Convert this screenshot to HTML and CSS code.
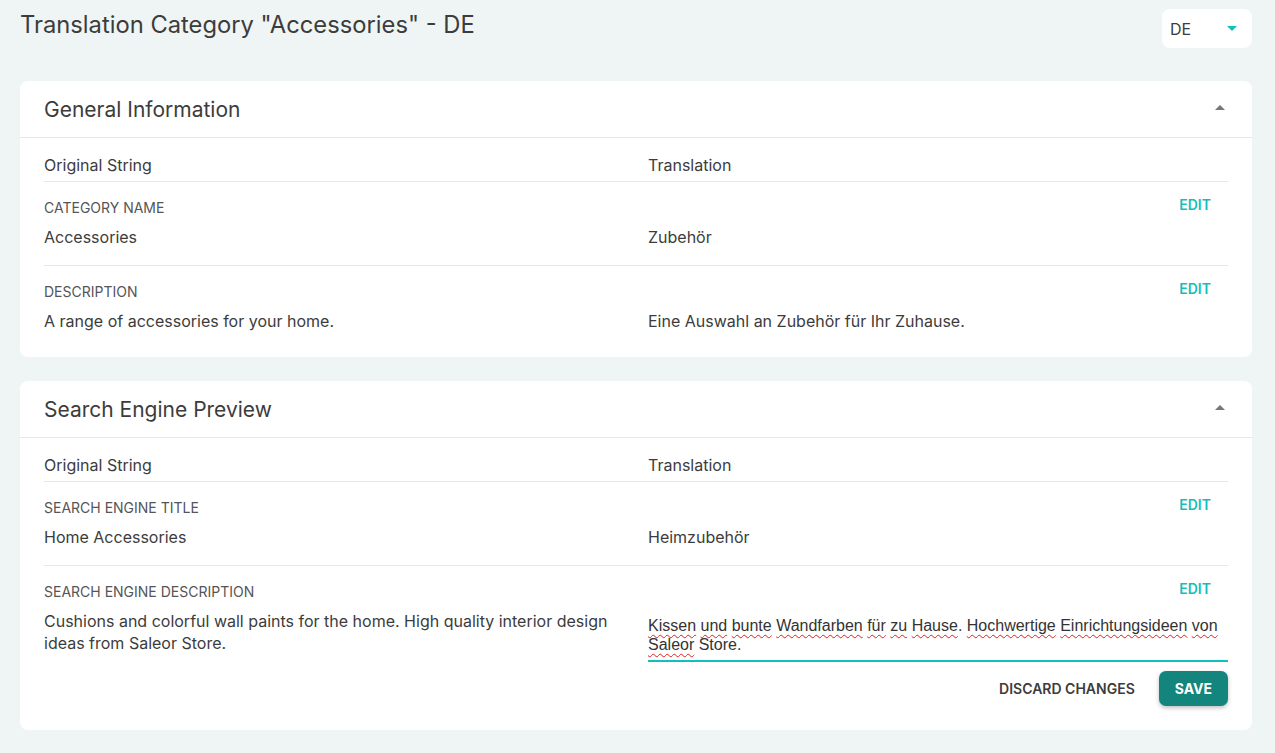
FILE: index.html
```html
<!DOCTYPE html>
<html lang="de">
<head>
<meta charset="utf-8">
<title>Translation Category</title>
<link rel="stylesheet" href="styles.css">
</head>
<body>
<div class="page">
  <header class="top">
    <h1 class="page-title">Translation Category "Accessories" - DE</h1>
    <div class="lang-select">
      <span>DE</span>
      <svg class="caret" width="10" height="5" viewBox="0 0 10 5"><path d="M0 0h10L5 5z" fill="#13bebb"/></svg>
    </div>
  </header>

  <section class="card">
    <div class="card-head">
      <h2 class="card-title">General Information</h2>
      <svg class="collapse" width="10" height="5" viewBox="0 0 10 5"><path d="M0 5h10L5 0z" fill="#777"/></svg>
    </div>
    <div class="card-body">
      <div class="grid head-row">
        <div>Original String</div>
        <div>Translation</div>
      </div>
      <div class="grid field">
        <div class="label">CATEGORY NAME</div>
        <div class="edit-cell"><span class="edit">EDIT</span></div>
        <div class="value">Accessories</div>
        <div class="value">Zubehör</div>
      </div>
      <div class="grid field last">
        <div class="label">DESCRIPTION</div>
        <div class="edit-cell"><span class="edit">EDIT</span></div>
        <div class="value">A range of accessories for your home.</div>
        <div class="value">Eine Auswahl an Zubehör für Ihr Zuhause.</div>
      </div>
    </div>
  </section>

  <section class="card">
    <div class="card-head">
      <h2 class="card-title">Search Engine Preview</h2>
      <svg class="collapse" width="10" height="5" viewBox="0 0 10 5"><path d="M0 5h10L5 0z" fill="#777"/></svg>
    </div>
    <div class="card-body">
      <div class="grid head-row">
        <div>Original String</div>
        <div>Translation</div>
      </div>
      <div class="grid field">
        <div class="label">SEARCH ENGINE TITLE</div>
        <div class="edit-cell"><span class="edit">EDIT</span></div>
        <div class="value">Home Accessories</div>
        <div class="value">Heimzubehör</div>
      </div>
      <div class="grid field editing">
        <div class="label">SEARCH ENGINE DESCRIPTION</div>
        <div class="edit-cell"><span class="edit">EDIT</span></div>
        <div class="value">Cushions and colorful wall paints for the home. High quality interior design ideas from Saleor Store.</div>
        <div class="textfield"><span class="sp">Kissen</span> <span class="sp">und</span> <span class="sp">bunte</span> <span class="sp">Wandfarben</span> <span class="sp">für</span> <span class="sp">zu</span> <span class="sp">Hause</span>. <span class="sp">Hochwertige</span> <span class="sp">Einrichtungsideen</span> <span class="sp">von</span> <span class="sp">Saleor</span> Store.</div>
      </div>
      <div class="actions">
        <span class="discard">DISCARD CHANGES</span>
        <span class="save">SAVE</span>
      </div>
    </div>
  </section>
</div>
</body>
</html>
```

FILE: styles.css
```css
* { box-sizing: border-box; }
html, body { margin: 0; }
body {
  background: #eff5f5;
  font-family: Inter, "Noto Sans", sans-serif;
  color: #3c3c3c;
}
.page {
  padding: 9px 23px 24px 20px;
}
.top {
  display: flex;
  justify-content: space-between;
  align-items: flex-start;
  margin-bottom: 33px;
}
.page-title {
  margin: 0;
  font-size: 23.75px;
  font-weight: 400;
  line-height: 32px;
  color: #3c3c3c;
}
.lang-select {
  width: 90px;
  height: 39px;
  background: #fff;
  border-radius: 8px;
  display: flex;
  align-items: center;
  justify-content: space-between;
  padding: 0 15px 0 8px;
  font-size: 16px;
  color: #3c3c3c;
}
.card {
  background: #fff;
  border-radius: 8px;
  margin-bottom: 24px;
}
.card-head {
  height: 57px;
  border-bottom: 1px solid #e8e8e8;
  display: flex;
  align-items: center;
  justify-content: space-between;
  padding: 0 27px 0 24px;
}
.card-title {
  margin: 0;
  font-size: 21px;
  font-weight: 400;
  line-height: 26px;
  color: #3c3c3c;
  padding-top: 1px;
}
.collapse { margin-top: -3px; }
.card-body {
  padding: 0 24px 8px;
}
.grid {
  display: grid;
  grid-template-columns: 1fr 1fr;
  column-gap: 24px;
}
.head-row {
  padding: 17px 0 6px;
  font-size: 16px;
  line-height: 20px;
  border-bottom: 1px solid #e8e8e8;
}
.field {
  padding: 18px 0 17px;
  row-gap: 10px;
  border-bottom: 1px solid #e8e8e8;
}
.field.last { border-bottom: 0; }
.field.editing { border-bottom: 0; padding-bottom: 0; }
.label {
  font-size: 14px;
  line-height: 16px;
  color: #555;
}
.edit-cell {
  display: flex;
  justify-content: flex-end;
  padding-right: 17px;
}
.edit {
  font-size: 14px;
  font-weight: 600;
  line-height: 16px;
  color: #13bebb;
  margin-top: -3px;
}
.value {
  font-size: 16px;
  line-height: 22px;
}
.textfield {
  font-family: "Liberation Sans", Arial, sans-serif;
  font-size: 16px;
  line-height: 19px;
  color: #333;
  padding: 6px 0 6px;
  border-bottom: 2px solid #13bebb;
}
.sp {
  text-decoration: underline wavy #e02020;
  text-decoration-thickness: 1px;
  text-underline-offset: 3px;
}
.actions {
  display: flex;
  justify-content: flex-end;
  align-items: center;
  gap: 24px;
  margin-top: 9px;
  padding-bottom: 16px;
}
.discard {
  font-size: 14px;
  font-weight: 600;
  color: #3c3c3c;
}
.save {
  background: #13857c;
  color: #fff;
  font-size: 14px;
  font-weight: 700;
  height: 35px;
  padding: 0 16px;
  display: flex;
  align-items: center;
  border-radius: 7px;
  box-shadow: 0 2px 4px rgba(0,0,0,0.25);
}
```
